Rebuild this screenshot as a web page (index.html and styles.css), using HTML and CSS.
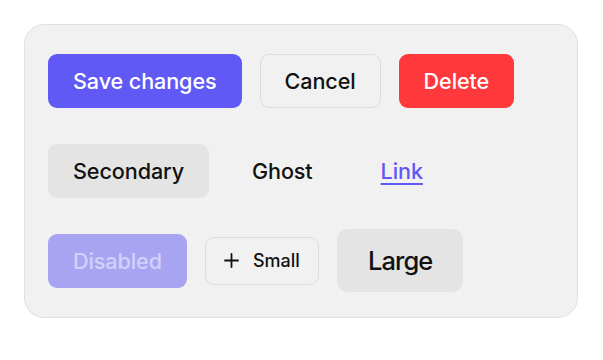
FILE: index.html
```html
<!DOCTYPE html>
<html>
<head>
<meta charset="utf-8">
<link rel="stylesheet" href="styles.css">
</head>
<body>
<div class="card">
  <div class="row row1">
    <button class="btn primary">Save changes</button>
    <button class="btn outline">Cancel</button>
    <button class="btn danger">Delete</button>
  </div>
  <div class="row row2">
    <button class="btn secondary">Secondary</button>
    <button class="btn ghost">Ghost</button>
    <button class="btn link">Link</button>
  </div>
  <div class="row row3">
    <button class="btn disabled" disabled>Disabled</button>
    <button class="btn outline small"><svg class="plus" width="15" height="15" viewBox="0 0 15 15"><path d="M7.5 1v13M1 7.5h13" stroke="#111" stroke-width="1.8" fill="none" stroke-linecap="round"/></svg>Small</button>
    <button class="btn secondary large">Large</button>
  </div>
</div>
</body>
</html>
```
FILE: styles.css
```css
html, body {
  margin: 0;
  padding: 0;
  background: #ffffff;
  font-family: Inter, "Noto Sans", sans-serif;
}
.card {
  box-sizing: border-box;
  margin: 24px 0 0 24px;
  width: 554px;
  height: 294px;
  padding: 29px 23px 0 23px;
  background: #f1f1f1;
  border: 1px solid #e0e0e0;
  border-radius: 20px;
}
.row {
  display: flex;
  align-items: center;
  gap: 18px;
}
.row1 { margin-bottom: 36px; }
.row3 { margin-top: 31px; height: 63px; }
.btn {
  box-sizing: border-box;
  display: inline-flex;
  align-items: center;
  justify-content: center;
  height: 54px;
  padding: 0 24px;
  border: 1px solid transparent;
  border-radius: 9px;
  font-family: Inter, "Noto Sans", sans-serif;
  font-size: 21.6px;
  font-weight: 500;
  letter-spacing: -0.1px;
  color: #111111;
  background: transparent;
  cursor: pointer;
}
.primary { background: #6159f6; color: #ffffff; }
.outline { background: #f1f1f1; border-color: #dcdcdc; }
.danger { background: #ff383c; color: #ffffff; }
.secondary { background: #e4e4e4; }
.ghost { background: transparent; }
.link { color: #6159f6; text-decoration: underline; text-underline-offset: 4px; text-decoration-thickness: 2px; }
.disabled { background: #a9a4f2; color: #d3d0fa; cursor: default; }
.small { height: 48px; padding: 0 18px; font-size: 18px; gap: 14px; letter-spacing: 0; }
.large { height: 63px; padding: 0 30px; font-size: 25.5px; letter-spacing: -0.9px; border-radius: 11px; }
.plus { display: block; }
```
